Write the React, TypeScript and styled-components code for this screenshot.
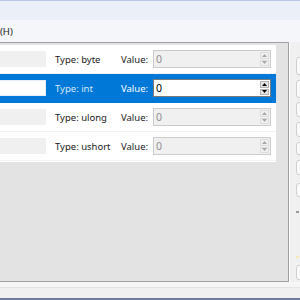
import React from "react";
import styled, { createGlobalStyle } from "styled-components";

const GlobalStyle = createGlobalStyle`
  html, body {
    margin: 0;
    padding: 0;
  }
  body {
    width: 300px;
    height: 300px;
    overflow: hidden;
    background: #f0f0f0;
    font-family: "Segoe UI", "Noto Sans", sans-serif;
    font-size: 9.5px;
  }
`;

const Window = styled.div`
  width: 300px;
  height: 300px;
  display: flex;
  flex-direction: column;
  overflow: hidden;
`;

const TitleBar = styled.div`
  height: 19px;
  flex: none;
  border-top: 1px solid #b7c8e6;
  background: #ebf0f8;
`;

const MenuBar = styled.div`
  height: 22px;
  flex: none;
  display: flex;
  align-items: center;
  background: #f4f6f9;
  color: #1a1a1a;
  font-size: 9.5px;
`;

const MenuItem = styled.span`
  padding: 0 6px 0 0;
`;

const Body = styled.div`
  height: 240px;
  flex: none;
  display: flex;
`;

const Panel = styled.div`
  width: 276px;
  flex: none;
  background: #e3e3e3;
  border: 1px solid #a0a0a0;
  border-left: none;
  padding: 2px 12px 0 0;
  box-shadow: 1px 0 0 #ffffff, 0 1px 0 #fafafa;
`;

const List = styled.div`
  background: #ffffff;
  display: flex;
  flex-direction: column;
  padding-bottom: 1px;
`;

const Row = styled.div<{ $selected?: boolean }>`
  height: 28px;
  display: flex;
  align-items: center;
  border-bottom: 1px solid ${(p) => (p.$selected ? "#0078d7" : "#f3f3f3")};
  background: ${(p) => (p.$selected ? "#0078d7" : "#ffffff")};
  color: ${(p) => (p.$selected ? "#ffffff" : "#1a1a1a")};
  padding-right: 4px;
`;

const NameBox = styled.div<{ $selected?: boolean }>`
  width: 46px;
  height: 16px;
  box-sizing: border-box;
  flex: none;
  background: ${(p) => (p.$selected ? "#ffffff" : "#f0f0f0")};
  border: 1px solid ${(p) => (p.$selected ? "#e8eef5" : "#f0f0f0")};
  border-left: none;
`;

const TypeLabel = styled.span<{ $selected?: boolean }>`
  width: 66px;
  margin-left: 9px;
  flex: none;
  white-space: nowrap;
  color: ${(p) => (p.$selected ? "#dbe9f8" : "#1a1a1a")};
`;

const ValueLabel = styled.span`
  width: 32px;
  flex: none;
`;

const Spin = styled.div<{ $active?: boolean }>`
  width: 118px;
  height: 18px;
  box-sizing: border-box;
  flex: none;
  display: flex;
  align-items: stretch;
  background: ${(p) => (p.$active ? "#ffffff" : "#f0f0f0")};
  border: 1px solid ${(p) => (p.$active ? "#7a7a7a" : "#cccccc")};
  padding: 1px;
`;

const SpinText = styled.span<{ $active?: boolean }>`
  flex: 1;
  display: flex;
  align-items: center;
  padding-left: 1px;
  font-size: 10.5px;
  color: ${(p) => (p.$active ? "#000000" : "#8f8f8f")};
`;

const SpinButtons = styled.div`
  width: 9px;
  display: flex;
  flex-direction: column;
  gap: 1px;
`;

const SpinButton = styled.div<{ $active?: boolean }>`
  flex: 1;
  display: flex;
  align-items: center;
  justify-content: center;
  background: ${(p) => (p.$active ? "#e5e5e5" : "#f0f0f0")};
  border: 1px solid ${(p) => (p.$active ? "#b4b4b4" : "#dddddd")};
  box-sizing: border-box;
`;

const SideColumn = styled.div`
  flex: 1;
  overflow: hidden;
  padding-left: 7px;
  display: flex;
  flex-direction: column;
`;

const SideButton = styled.div<{ $h: number; $gap: number }>`
  width: 30px;
  height: ${(p) => p.$h}px;
  margin-top: ${(p) => p.$gap}px;
  flex: none;
  box-sizing: border-box;
  background: #fbfbfb;
  border: 1px solid #cfcfcf;
  border-radius: 3px;
`;

const SideMark = styled.div<{ $gap: number; $color: string }>`
  width: 3px;
  height: 2px;
  margin-top: ${(p) => p.$gap}px;
  background: ${(p) => p.$color};
  flex: none;
`;

const StatusStrip = styled.div`
  height: 15px;
  flex: none;
  border-top: 1px solid #f7f7f7;
  background: linear-gradient(#f6f6f6 0, #f6f6f6 4px, #e4e4e4 4px, #e4e4e4 5px, #f0f0f0 5px);
`;

const Taskbar = styled.div`
  height: 2px;
  flex: none;
  background: #6b7c9c;
`;

const Arrow = ({ up, active }: { up?: boolean; active?: boolean }) => (
  <svg width="5" height="3" viewBox="0 0 5 3">
    <path
      d={up ? "M0 3 L2.5 0 L5 3 Z" : "M0 0 L5 0 L2.5 3 Z"}
      fill={active ? "#000000" : "#a8a8a8"}
    />
  </svg>
);

interface IField {
  type: string;
}

const fields: IField[] = [
  { type: "byte" },
  { type: "int" },
  { type: "ulong" },
  { type: "ushort" },
];

const selectedIndex = 1;

const App = () => {
  return (
    <Window>
      <GlobalStyle />
      <TitleBar />
      <MenuBar>
        <MenuItem>{"(H)"}</MenuItem>
      </MenuBar>
      <Body>
        <Panel>
          <List>
            {fields.map((f, i) => {
              const sel = i === selectedIndex;
              return (
                <Row key={f.type} $selected={sel}>
                  <NameBox $selected={sel} />
                  <TypeLabel $selected={sel}>{`Type: ${f.type}`}</TypeLabel>
                  <ValueLabel>{"Value:"}</ValueLabel>
                  <Spin $active={sel}>
                    <SpinText $active={sel}>0</SpinText>
                    <SpinButtons>
                      <SpinButton $active={sel}>
                        <Arrow up active={sel} />
                      </SpinButton>
                      <SpinButton $active={sel}>
                        <Arrow active={sel} />
                      </SpinButton>
                    </SpinButtons>
                  </Spin>
                </Row>
              );
            })}
          </List>
        </Panel>
        <SideColumn>
          <SideButton $h={18} $gap={15} />
          <SideButton $h={18} $gap={5} />
          <SideButton $h={15} $gap={4} />
          <SideButton $h={15} $gap={5} />
          <SideButton $h={13} $gap={5} />
          <SideButton $h={15} $gap={5} />
          <SideButton $h={14} $gap={8} />
          <SideMark $gap={14} $color="#9a9a9a" />
          <SideMark $gap={43} $color="#f3e9b0" />
          <SideButton $h={15} $gap={7} />
        </SideColumn>
      </Body>
      <StatusStrip />
      <Taskbar />
    </Window>
  );
};

export default App;
